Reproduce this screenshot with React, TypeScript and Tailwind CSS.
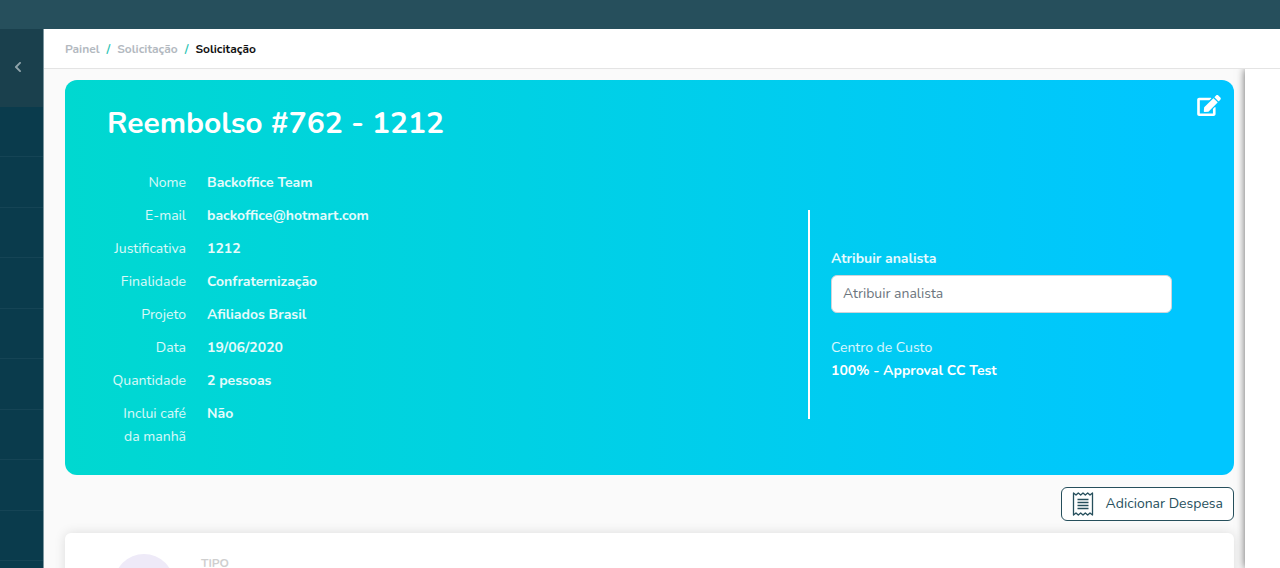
import { FaChevronLeft, FaEdit } from "react-icons/fa";

const details = [
  { label: "Nome", value: "Backoffice Team" },
  { label: "E-mail", value: "backoffice@hotmart.com" },
  { label: "Justificativa", value: "1212" },
  { label: "Finalidade", value: "Confraternização" },
  { label: "Projeto", value: "Afiliados Brasil" },
  { label: "Data", value: "19/06/2020" },
  { label: "Quantidade", value: "2 pessoas" },
  { label: "Inclui café da manhã", value: "Não" },
];

const menuSlots = [1, 2, 3, 4, 5, 6, 7, 8, 9];

function ReceiptIcon() {
  return (
    <svg width="22" height="24" viewBox="0 0 22 24" fill="none" stroke="currentColor" strokeWidth="1.3" strokeLinejoin="round" aria-hidden="true">
      <path d="M1.5 1 L4 3 L6.3 1 L8.7 3 L11 1 L13.3 3 L15.7 1 L18 3 L20.5 1 V23 L18 21 L15.7 23 L13.3 21 L11 23 L8.7 21 L6.3 23 L4 21 L1.5 23 Z" />
      <path d="M5.5 7.5 H16.5 M5.5 10.5 H16.5 M5.5 13.5 H16.5 M5.5 16.5 H16.5" />
    </svg>
  );
}

function Sidebar() {
  return (
    <nav className="w-11 shrink-0 border-r border-[#7d979f] bg-[#0a3b4c]" aria-label="Menu">
      <button type="button" aria-label="Recolher menu" className="flex h-[78px] w-full items-center justify-center bg-[#1a404d] pr-2 pb-[2px] text-[#8fa3aa]">
        <FaChevronLeft className="h-3 w-2" />
      </button>
      <ul className="grid h-[454px] grid-rows-9">
        {menuSlots.map((slot) => (
          <li key={slot} className="border-b border-[#154455]" />
        ))}
      </ul>
    </nav>
  );
}

function Breadcrumb() {
  return (
    <nav className="flex h-10 shrink-0 items-center gap-[7px] border-b border-[#e4e4e4] bg-white px-[21px] text-xs font-bold" aria-label="Trilha">
      <a href="#painel" className="text-[#b3b9bf]">Painel</a>
      <span className="text-[#2cc5b5]">/</span>
      <a href="#solicitacoes" className="text-[#b3b9bf]">Solicitação</a>
      <span className="text-[#2cc5b5]">/</span>
      <span className="text-[#111111]">Solicitação</span>
    </nav>
  );
}

function RequestCard() {
  return (
    <section className="relative rounded-xl bg-linear-to-r from-[#00d8d0] to-[#00c6ff] to-95% pt-[26px] pb-[17px] text-white">
      <button type="button" aria-label="Editar" className="absolute top-[15px] right-[13px]">
        <FaEdit className="h-[21px] w-6" />
      </button>
      <h1 className="px-[42px] text-[30px] leading-9 font-bold">Reembolso #762 - 1212</h1>
      <div className="mt-[29px] grid grid-cols-[1fr_426px] items-center text-sm leading-[23px]">
        <dl className="pl-[42px]">
          {details.map(({ label, value }) => (
            <div key={label} className="flex gap-[21px] pb-[10px]">
              <dt className="w-[79px] shrink-0 text-right text-white/85">{label}</dt>
              <dd className="font-bold text-white/90">{value}</dd>
            </div>
          ))}
        </dl>
        <div className="flex h-[209px] flex-col justify-center border-l-2 border-white pr-[62px] pl-[21px]">
          <label htmlFor="analista" className="font-bold text-white/90">Atribuir analista</label>
          <input
            id="analista"
            type="text"
            placeholder="Atribuir analista"
            className="mt-[5px] mb-[23px] h-[38px] w-full rounded-md border border-[#ced4da] bg-white px-[11px] pb-[2px] text-gray-700 placeholder:text-[#6c757d]"
          />
          <p className="text-white/85">Centro de Custo</p>
          <p className="font-bold">100% - Approval CC Test</p>
        </div>
      </div>
    </section>
  );
}

export default function App() {
  return (
    <div className="flex h-screen flex-col overflow-hidden bg-[#fafafa] font-['Nunito','Lato',sans-serif]">
      <header className="h-[29px] shrink-0 bg-[#264f5c]" />
      <div className="flex min-h-0 flex-1">
        <Sidebar />
        <div className="flex min-w-0 flex-1 flex-col">
          <Breadcrumb />
          <div className="flex min-h-0 flex-1 overflow-hidden">
            <main className="min-w-0 flex-1 pt-[11px] pr-[11px] pl-[21px]">
              <RequestCard />
              <div className="flex justify-end py-3">
                <button type="button" className="flex h-[34px] items-center gap-3 rounded-md border border-[#264f5c] bg-white px-[10px] text-sm text-[#264f5c]">
                  <ReceiptIcon />
                  Adicionar Despesa
                </button>
              </div>
              <article className="flex gap-[27px] rounded-md bg-white px-[49px] py-[21px] shadow-[0_0_12px_rgba(0,0,0,0.12)]">
                <div className="size-[60px] rounded-full bg-[#eeeaf8]" />
                <p className="pt-[3px] text-xs leading-none font-bold text-[#cfcfcf]">TIPO</p>
              </article>
            </main>
            <aside className="w-[35px] shrink-0 bg-white shadow-[0_0_8px_rgba(0,0,0,0.6)]" />
          </div>
        </div>
      </div>
    </div>
  );
}
